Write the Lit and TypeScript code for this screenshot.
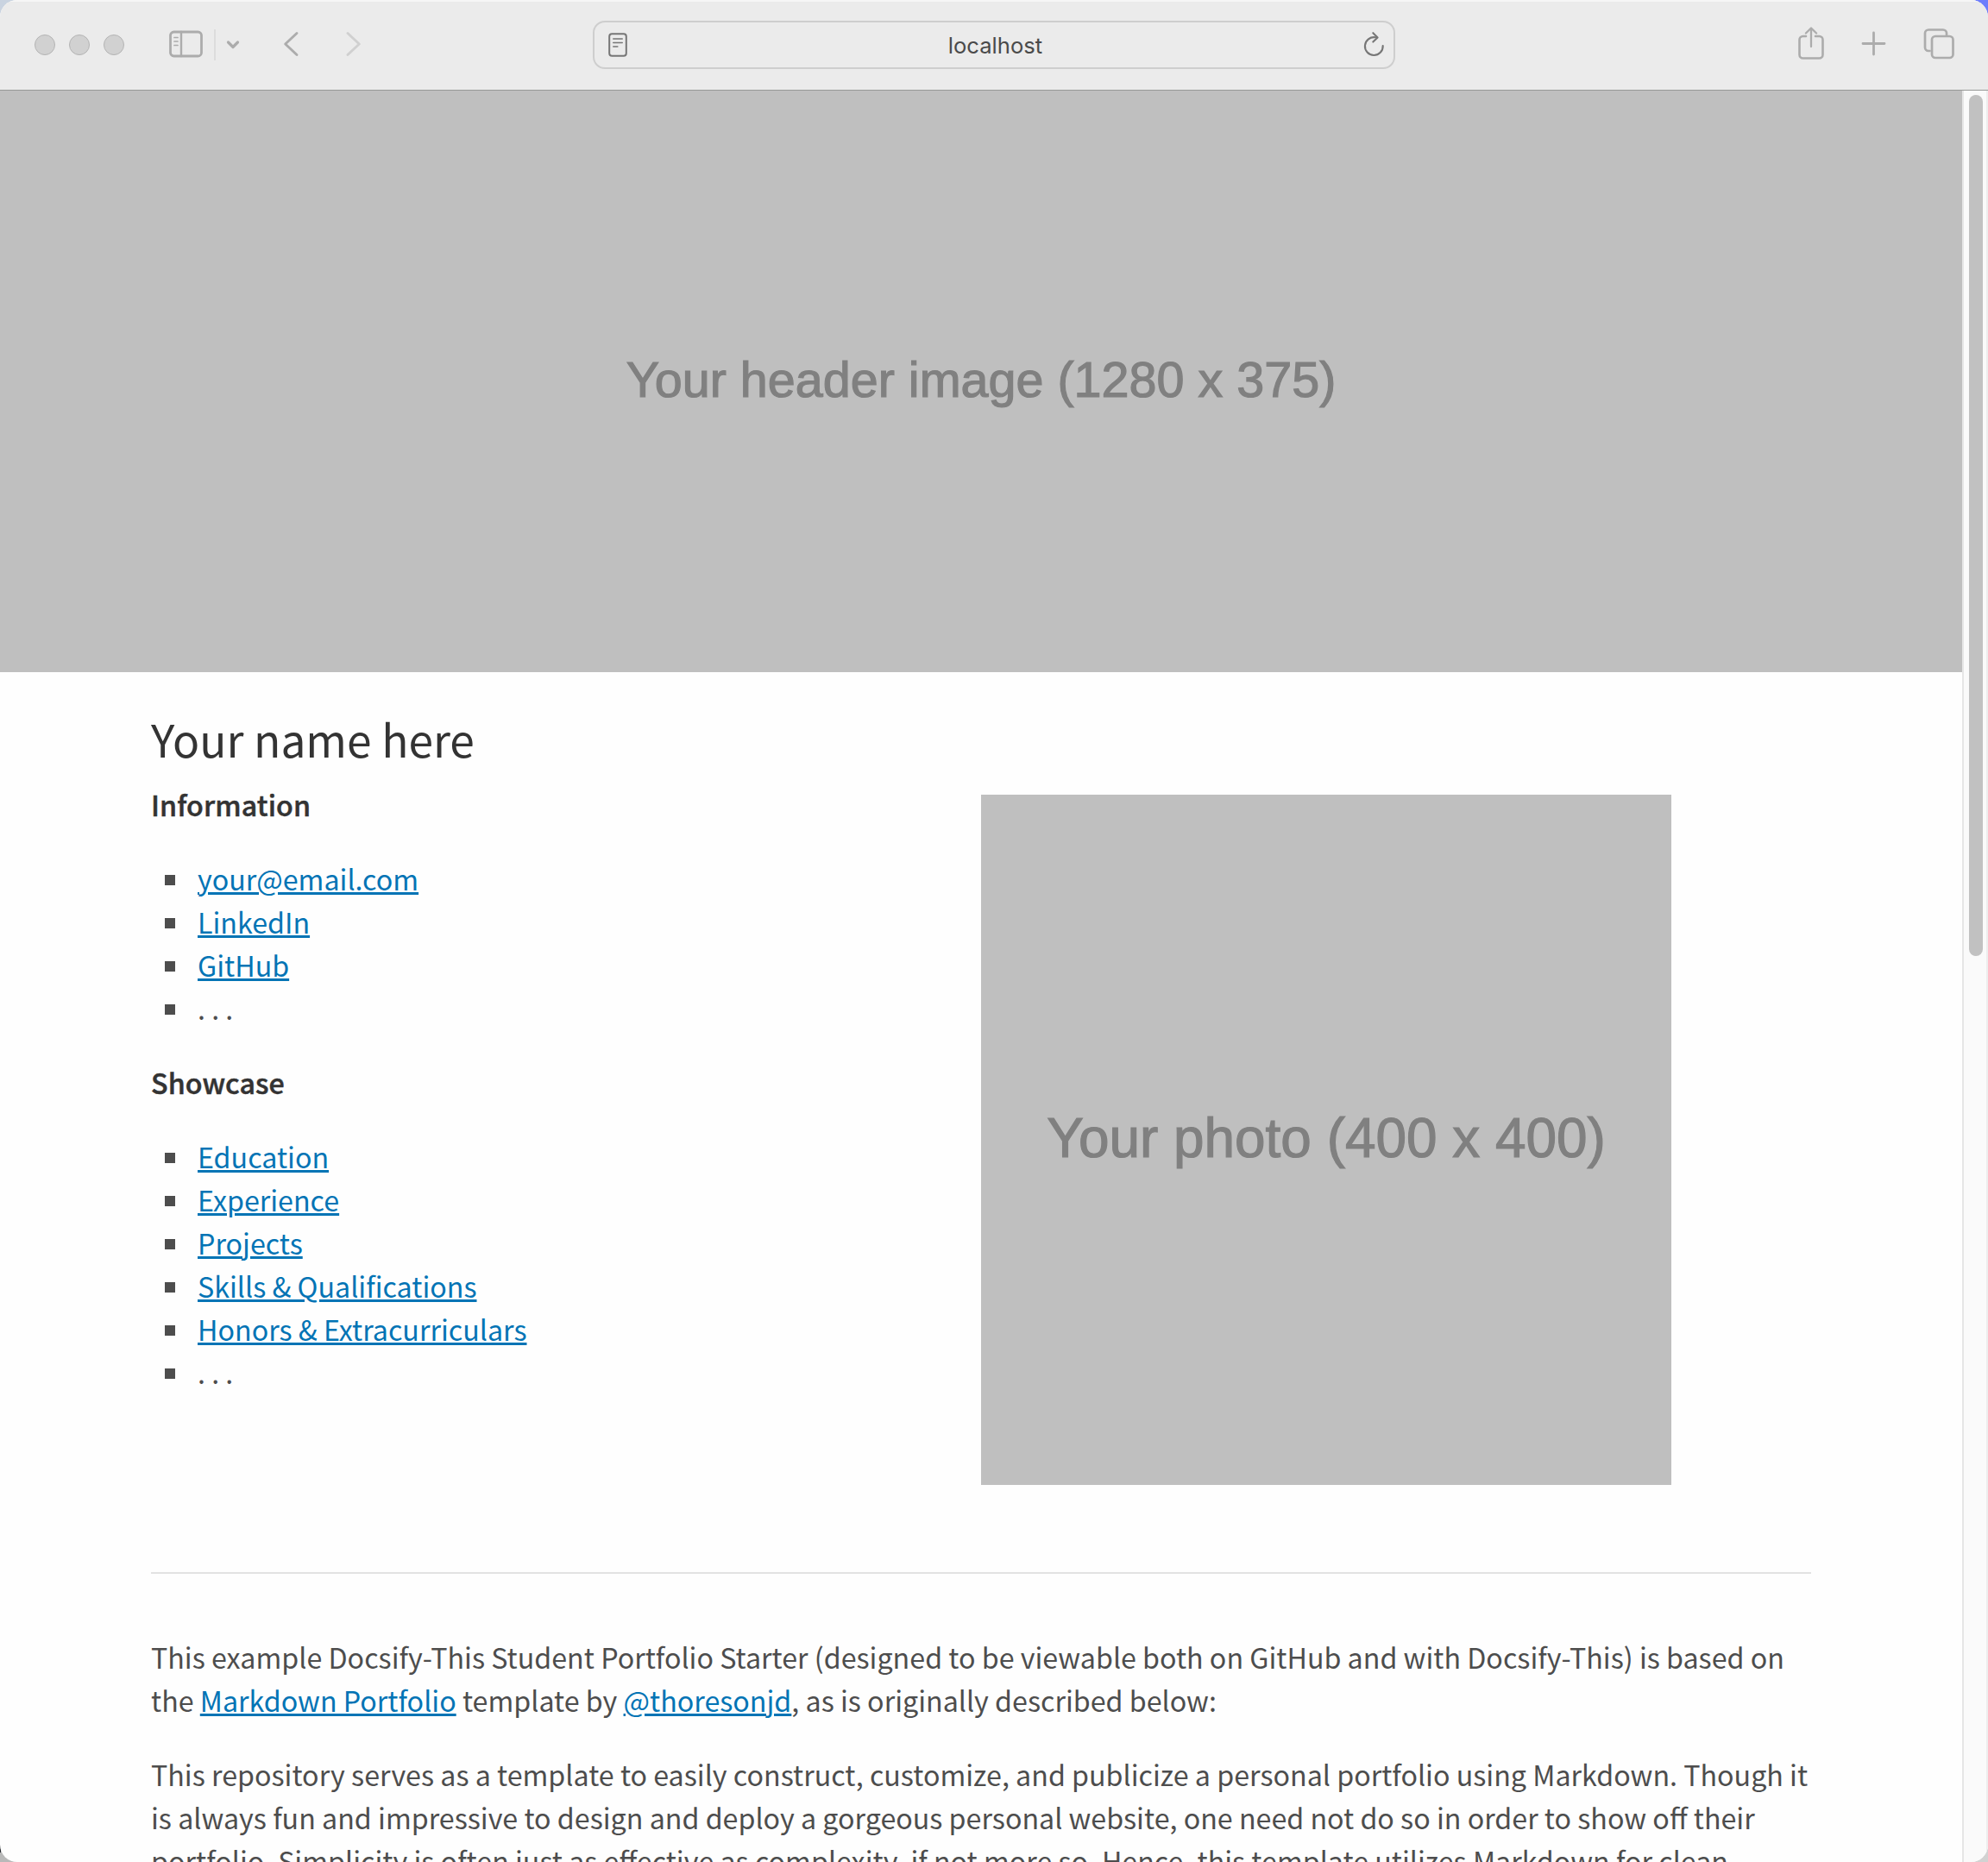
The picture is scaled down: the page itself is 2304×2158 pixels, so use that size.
import { LitElement, html, css } from "lit";
import { customElement, property } from "lit/decorators.js";

/** Browser window toolbar: traffic lights, navigation, address field, actions. */
@customElement("browser-toolbar")
class BrowserToolbar extends LitElement {
  @property() host = "";

  static styles = css`
    :host {
      display: grid;
      grid-template-columns: 687px 930px 1fr;
      height: 105px;
      box-sizing: border-box;
      background: #ebebeb;
      border-top: 2px solid #f6f6f6;
      border-bottom: 1px solid #979997;
    }
    svg {
      display: block;
      flex: none;
      fill: none;
      stroke-linecap: round;
      stroke-linejoin: round;
    }
    .side {
      display: flex;
      align-items: flex-start;
      color: #acacac;
    }
    .lights {
      display: flex;
      gap: 16px;
      padding: 38px 0 0 40px;
    }
    .light {
      width: 24px;
      height: 24px;
      box-sizing: border-box;
      border: 1px solid #b4b4b4;
      border-radius: 50%;
      background: #d1d1d1;
    }
    .sidebar {
      margin: 32px 0 0 51px;
    }
    .divider {
      width: 2px;
      height: 36px;
      margin: 32px 0 0 13px;
      background: #dcdcdc;
    }
    .down {
      margin: 41px 0 0 10px;
    }
    .back {
      margin: 32px 0 0 46px;
    }
    .forward {
      margin: 32px 0 0 44px;
      color: #d0d0d0;
    }
    .address {
      display: flex;
      align-items: center;
      justify-content: space-between;
      height: 56px;
      margin-top: 22px;
      box-sizing: border-box;
      padding: 0 10px 0 15px;
      border: 2px solid #cecece;
      border-radius: 14px;
      color: #767676;
    }
    .host {
      font: 25.6px/32px Inter, "Liberation Sans", sans-serif;
      color: #4a4a4a;
      padding: 2px 0 0;
    }
    .actions {
      justify-content: flex-end;
      padding-right: 37px;
    }
    .share {
      margin: 27px 41px 0 0;
    }
    .plus {
      margin: 33px 43px 0 0;
    }
    .tabs {
      margin: 29px 0 0;
    }
  `;

  render() {
    return html`
      <div class="side">
        <div class="lights">
          <span class="light"></span><span class="light"></span><span class="light"></span>
        </div>
        <svg class="sidebar" width="40" height="34" stroke="currentColor">
          <rect x="2.5" y="3" width="36" height="28" rx="4" stroke-width="2.8" />
          <path d="M15 3v28" stroke-width="2.4" />
          <path d="M7 9.500h4M7 14h4M7 18.500h4" stroke-width="1.7" />
        </svg>
        <div class="divider"></div>
        <svg class="down" width="20" height="16" stroke="currentColor">
          <path d="M4.500 6l5.500 5.500 5.500-5.500" stroke-width="3.2" />
        </svg>
        <svg class="back" width="24" height="34" stroke="currentColor">
          <path d="M18 4.500L4.700 17 18 29.500" stroke-width="2.9" />
        </svg>
        <svg class="forward" width="24" height="34" stroke="currentColor">
          <path d="M9 4.500L22.300 17 9 29.500" stroke-width="2.9" />
        </svg>
      </div>
      <div class="address">
        <svg width="24" height="32" stroke="currentColor">
          <rect x="2.200" y="3.200" width="19.600" height="25.600" rx="3" stroke-width="2" />
          <path d="M6.800 9h10.400M6.800 13.500h10.400M6.800 18h5" stroke-width="1.6" />
        </svg>
        <span class="host">${this.host}</span>
        <svg width="26" height="34" stroke="currentColor" stroke-width="2.1">
          <path d="M15 8.300A10.400 10.400 0 1 0 23.700 18" />
          <path d="M12.300 3.200L17.600 8.500 12.300 13.600" />
        </svg>
      </div>
      <div class="side actions">
        <svg class="share" width="32" height="42" stroke="currentColor" stroke-width="2.6">
          <path d="M10 13H6.500a4 4 0 0 0-4 4v17.500a4 4 0 0 0 4 4h19a4 4 0 0 0 4-4V17a4 4 0 0 0-4-4H21" />
          <path d="M16 25V4M9.900 9.500L16 3.500 22.100 9.500" stroke-width="2.3" />
        </svg>
        <svg class="plus" width="30" height="30" stroke="currentColor" stroke-width="2.8">
          <path d="M15.500 3v25M3 15.500h25" />
        </svg>
        <svg class="tabs" width="38" height="40" stroke="currentColor" stroke-width="2.7">
          <path d="M7.500 28H6a4 4 0 0 1-4-4V7.500a4 4 0 0 1 4-4h17a4 4 0 0 1 4 4V9.500" />
          <rect x="10" y="11" width="24.500" height="25" rx="4" />
        </svg>
      </div>
    `;
  }
}

const information = [
  { label: "your@email.com", link: true },
  { label: "LinkedIn", link: true },
  { label: "GitHub", link: true },
  { label: ". . .", link: false },
];

const showcase = [
  { label: "Education", link: true },
  { label: "Experience", link: true },
  { label: "Projects", link: true },
  { label: "Skills & Qualifications", link: true },
  { label: "Honors & Extracurriculars", link: true },
  { label: ". . .", link: false },
];

@customElement("app-root")
class AppRoot extends LitElement {
  static styles = css`
    :host {
      display: block;
      height: 2158px;
      overflow: hidden;
      background:
        linear-gradient(#6d7dfc, #6d7dfc) top right / 40px 40px no-repeat,
        linear-gradient(#c9d3e0, #c9d3e0) top left / 40px 40px no-repeat,
        linear-gradient(105deg, #e4e4e4 0 5px, #2b2e33 5px 8px, #b9b9b9 8px) bottom left / 40px 40px no-repeat,
        #d2d2d2;
    }
    .window {
      display: flex;
      flex-direction: column;
      height: 2158px;
      overflow: hidden;
      border-radius: 20px;
      background: #fefefe;
    }
    browser-toolbar {
      flex: none;
    }
    .viewport {
      flex: 1;
      min-height: 0;
      display: flex;
    }
    .page {
      flex: 1;
      min-width: 0;
      overflow: hidden;
      font: 32.23px/50px "Noto Sans CJK SC", "Source Sans Pro", sans-serif;
      color: #4d4d4d;
    }
    .scrollbar {
      flex: none;
      box-sizing: border-box;
      width: 30px;
      padding: 5px 0 0 6px;
      border-left: 2px solid #e6e6e6;
      border-right: 2px solid #ededed;
      background: #fafafa;
    }
    .thumb {
      width: 16px;
      height: 998px;
      border-radius: 8px;
      background: #c1c1c1;
    }
    .placeholder {
      box-sizing: border-box;
      background: #bfbfbf;
      color: #808080;
      font-family: "Liberation Sans", Arial, sans-serif;
      text-align: center;
      white-space: nowrap;
      -webkit-text-stroke: 1.2px #808080;
    }
    .banner {
      height: 674px;
      padding-top: 303px;
      font-size: 57.5px;
      line-height: 64px;
    }
    .photo {
      width: 800px;
      height: 800px;
      margin-top: 33px;
      padding-top: 362px;
      font-size: 63.9px;
      line-height: 72px;
    }
    .content {
      padding: 45px 175px 0;
    }
    h1 {
      margin: 0;
      font-size: 51.5px;
      line-height: 64px;
      font-weight: 400;
      color: #333;
    }
    .profile {
      display: grid;
      grid-template-columns: 962px 1fr;
      align-items: start;
    }
    .details {
      display: flex;
      flex-direction: column;
      gap: 36px;
      padding-top: 19px;
    }
    h2 {
      margin: 0;
      font-size: 32.2px;
      line-height: 50px;
      font-weight: 500;
      letter-spacing: 0.1px;
      color: #333;
      -webkit-text-stroke: 0.5px #333;
    }
    ul {
      margin: 0;
      padding: 0 0 0 16px;
      list-style: none;
    }
    li {
      display: flex;
      align-items: center;
      gap: 26px;
      height: 50px;
    }
    li::before {
      content: "";
      width: 12px;
      height: 12px;
      margin-top: 4px;
      background: #4d4d4d;
    }
    a {
      color: #0374b5;
      text-decoration: underline;
      text-decoration-thickness: 3px;
      text-underline-offset: 2px;
    }
    hr {
      height: 2px;
      margin: 101px 0 71px;
      border: 0;
      background: #e2e2e2;
    }
    p {
      margin: 0 0 36px;
    }
  `;

  private list(items: { label: string; link: boolean }[]) {
    return html`<ul>
      ${items.map((i) => html`<li>${i.link ? html`<a>${i.label}</a>` : html`<span>${i.label}</span>`}</li>`)}
    </ul>`;
  }

  render() {
    return html`
      <div class="window">
        <browser-toolbar host="localhost"></browser-toolbar>
        <div class="viewport">
          <main class="page">
            <div class="placeholder banner">Your header image (1280 x 375)</div>
            <div class="content">
              <h1>Your name here</h1>
              <div class="profile">
                <section class="details">
                  <h2>Information</h2>
                  ${this.list(information)}
                  <h2>Showcase</h2>
                  ${this.list(showcase)}
                </section>
                <div class="placeholder photo">Your photo (400 x 400)</div>
              </div>
              <hr />
              <p>
                This example Docsify-This Student Portfolio Starter (designed to be viewable both on
                GitHub and with Docsify-This) is based on the <a>Markdown Portfolio</a> template by
                <a>@thoresonjd</a>, as is originally described below:
              </p>
              <p>
                This repository serves as a template to easily construct, customize, and publicize a
                personal portfolio using Markdown. Though it is always fun and impressive to design
                and deploy a gorgeous personal website, one need not do so in order to show off
                their portfolio. Simplicity is often just as effective as complexity, if not more
                so. Hence, this template utilizes Markdown for clean
              </p>
            </div>
          </main>
          <aside class="scrollbar"><div class="thumb"></div></aside>
        </div>
      </div>
    `;
  }
}
